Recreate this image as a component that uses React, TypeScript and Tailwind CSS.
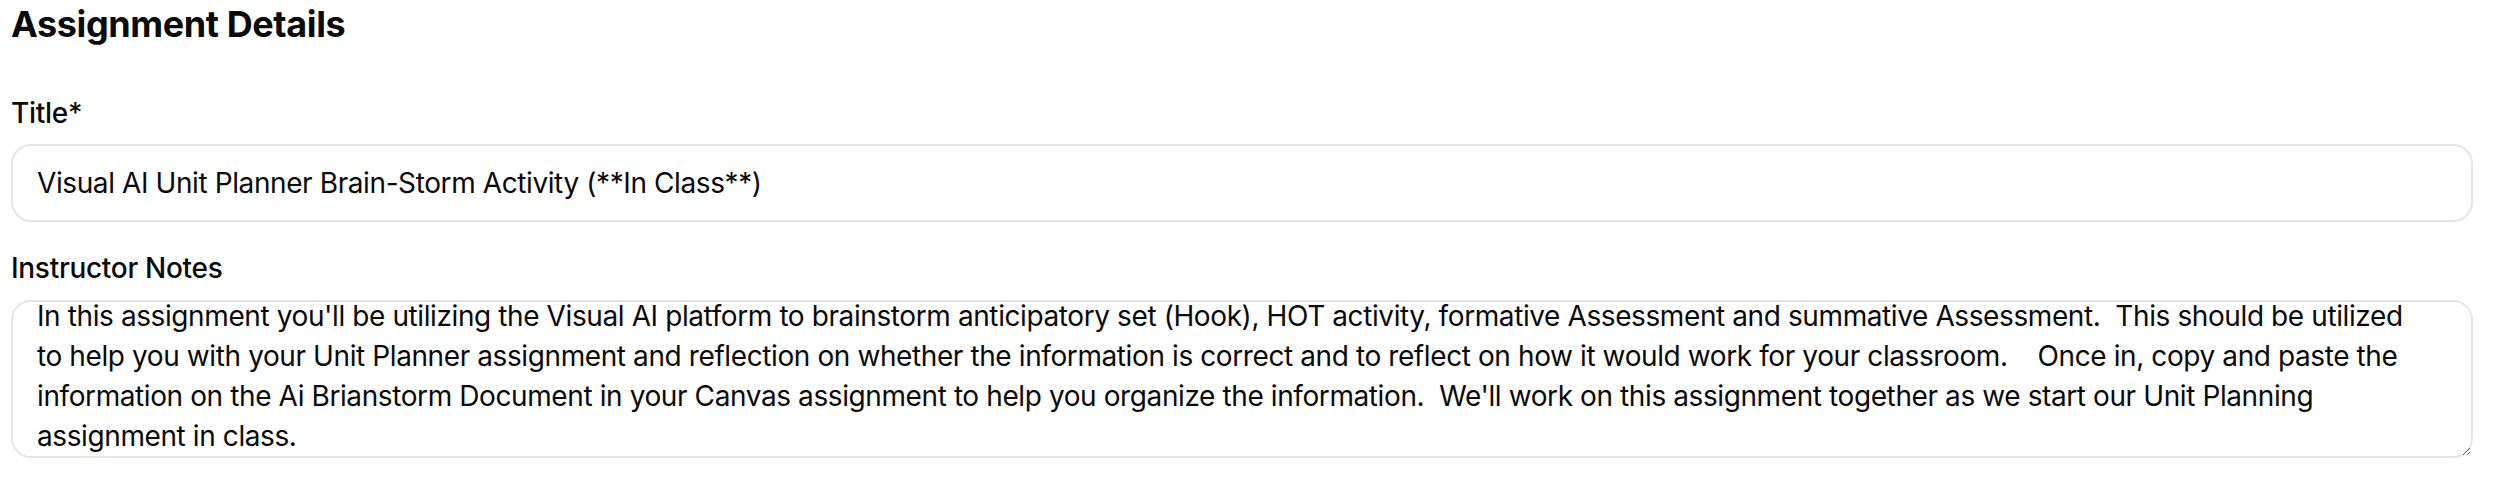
import React, { useEffect, useRef } from 'react';

const title = 'Visual AI Unit Planner Brain-Storm Activity (**In Class**)';

// line breaks kept where the reference wraps them
const notes = [
  "In this assignment you'll be utilizing the Visual AI platform to brainstorm anticipatory set (Hook), HOT activity, formative Assessment and summative Assessment.  This should be utilized",
  'to help you with your Unit Planner assignment and reflection on whether the information is correct and to reflect on how it would work for your classroom.    Once in, copy and paste the',
  "information on the Ai Brianstorm Document in your Canvas assignment to help you organize the information.  We'll work on this assignment together as we start our Unit Planning",
  'assignment in class.',
].join('\n');

const App: React.FC = () => {
  const notesRef = useRef<HTMLTextAreaElement>(null);

  // the notes box is shown scrolled a little, as in the reference
  useEffect(() => {
    if (notesRef.current) notesRef.current.scrollTop = 22;
  }, []);

  return (
    <div className="w-[2510px] h-[482px] bg-white pl-[11px] pr-[37px] text-[#0a0a0a] font-[family-name:Inter,sans-serif]">
      <h2 className="text-[36px] leading-[48px] font-bold tracking-[-0.4px]">Assignment Details</h2>

      <label className="block mt-[45px] text-[28px] leading-[40px] font-medium tracking-[-0.3px]">Title*</label>
      <input
        type="text"
        defaultValue={title}
        className="block mt-[11px] w-full h-[78px] rounded-[20px] border-2 border-[#e5e5e5] bg-white px-6 text-[28px] tracking-[-0.4px] outline-none"
      />

      <label className="block mt-[26px] text-[28px] leading-[40px] font-medium tracking-[-0.3px]">Instructor Notes</label>
      <textarea
        ref={notesRef}
        defaultValue={notes}
        className="block mt-[12px] w-full h-[158px] rounded-[20px] border-2 border-[#e5e5e5] bg-white px-6 py-4 text-[28px] leading-[40px] tracking-[-0.4px] outline-none"
      />
    </div>
  );
};

export default App;
